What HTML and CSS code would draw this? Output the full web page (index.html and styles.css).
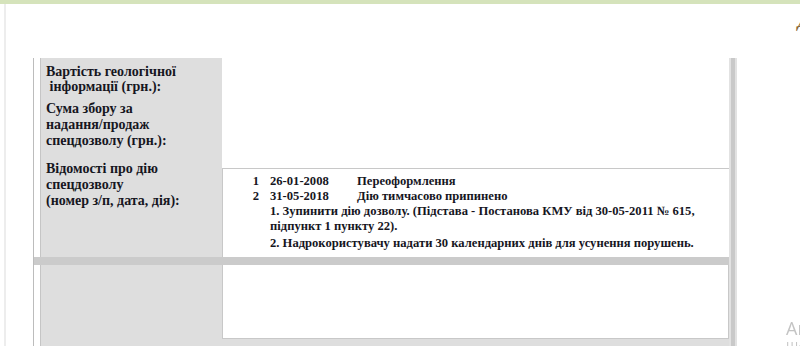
FILE: index.html
```html
<!DOCTYPE html>
<html lang="uk">
<head>
<meta charset="utf-8">
<link rel="stylesheet" href="styles.css">
</head>
<body>
<div class="topbar"></div>
<div class="page">
  <div class="header"><span class="hdr-glyph">Д</span></div>
  <div class="sheet">
    <div class="gap gap-top"></div>
    <div class="label label-top">
      <p class="lp lp1">Вартість геологічної<br>&nbsp;інформації (грн.):</p>
      <p class="lp lp2">Сума збору за<br>надання/продаж<br>спецдозволу (грн.):</p>
      <p class="lp lp3">Відомості про дію<br>спецдозволу<br>(номер з/п, дата, дія):</p>
    </div>
    <div class="v-empty"></div>
    <div class="v-history">
      <div class="hist">
        <span class="num">1</span><span class="date">26-01-2008</span><span class="act">Переоформлення</span>
        <span class="num">2</span><span class="date">31-05-2018</span><span class="act">Дію тимчасово припинено</span>
        <p class="note">1. Зупинити дію дозволу. (Підстава - Постанова КМУ від 30-05-2011 № 615,<br>підпункт 1 пункту 22).</p>
        <p class="note note2">2. Надрокористувачу надати 30 календарних днів для усунення порушень.</p>
      </div>
    </div>
    <div class="hbar"></div>
    <div class="rbar"></div>
    <div class="gap gap-bottom"></div>
    <div class="label label-bottom"></div>
    <div class="v-last"><div class="v-box"></div></div>
  </div>
</div>
<div class="watermark">
  <div class="wm-title">Активація Windows</div>
  <div class="wm-sub">Щоб активувати Windows, перейдіть до настройок.</div>
</div>
</body>
</html>
```

FILE: styles.css
```css
html, body {
  margin: 0;
  padding: 0;
  background: #ffffff;
  overflow: hidden;
  height: 346px;
}

body {
  font-family: "Liberation Serif", "Times New Roman", serif;
  color: #16161e;
}

.topbar {
  height: 4px;
  background: #d5e3bb;
}

.page {
  margin-left: 4px;
  border-left: 2px solid #ededed;
  height: 342px;
  overflow: hidden;
}

.header {
  height: 54px;
  display: flex;
  justify-content: flex-end;
  overflow: hidden;
}

.hdr-glyph {
  margin-top: 9px;
  margin-right: -9px;
  font-size: 17px;
  line-height: 17px;
  font-weight: bold;
  font-style: italic;
  color: #8a6a3a;
}

.sheet {
  margin-left: 27px;
  width: 703px;
  border-left: 1px solid #bcbcbc;
  display: grid;
  grid-template-columns: 6px 182px 507px 8px;
  grid-template-rows: 111px 88px 8px 100px;
}

.gap-top { grid-column: 1; grid-row: 1 / 3; }
.gap-bottom { grid-column: 1; grid-row: 4; }

.label {
  background: #dedede;
  border-left: 1px solid #c5c5c5;
  box-sizing: border-box;
}

.label-top {
  grid-column: 2;
  grid-row: 1 / 3;
  padding: 6px 0 0 5px;
}

.label-bottom {
  grid-column: 2;
  grid-row: 4;
}

.lp {
  margin: 0;
  font-size: 14px;
  line-height: 16px;
  font-weight: bold;
}

.lp1 { line-height: 15px; }
.lp2 { margin-top: 7px; }
.lp3 { margin-top: 12px; }

.v-empty {
  grid-column: 3;
  grid-row: 1;
  background: #ffffff;
  border-bottom: 1px solid #c8c8c8;
}

.v-history {
  grid-column: 3;
  grid-row: 2;
  background: #ffffff;
  border-left: 1px solid #c8c8c8;
  padding: 5px 0 0 27px;
}

.hist {
  display: grid;
  grid-template-columns: 9px 87px auto;
  font-size: 12.6px;
  line-height: 15px;
  font-weight: bold;
}

.num {
  text-align: right;
}

.date {
  padding-left: 11px;
}

.act {
  padding-left: 11px;
}

.note {
  grid-column: 2 / 4;
  margin: 0;
  padding-left: 11px;
  white-space: nowrap;
}

.note2 {
  margin-top: 2px;
}

.hbar {
  grid-column: 1 / 4;
  grid-row: 3;
  background: #cbcbcb;
}

.rbar {
  grid-column: 4;
  grid-row: 1 / 5;
  background: linear-gradient(to right, #e2e2e2 0, #e2e2e2 2px, #c9c9c9 2px, #c9c9c9 6px, #e2e2e2 6px);
}

.v-last {
  grid-column: 3;
  grid-row: 4;
  background: #dedede;
}

.v-box {
  height: 73px;
  background: #ffffff;
  border-left: 1px solid #c8c8c8;
  border-right: 1px solid #c8c8c8;
  border-bottom: 1px solid #c8c8c8;
}

.watermark {
  position: fixed;
  left: 786px;
  top: 316px;
  white-space: nowrap;
  font-family: "Open Sans", "Noto Sans", sans-serif;
  color: #c4c4c4;
}

.wm-title {
  font-size: 18px;
  line-height: 24px;
}

.wm-sub {
  font-size: 12px;
  line-height: 14px;
}
```
